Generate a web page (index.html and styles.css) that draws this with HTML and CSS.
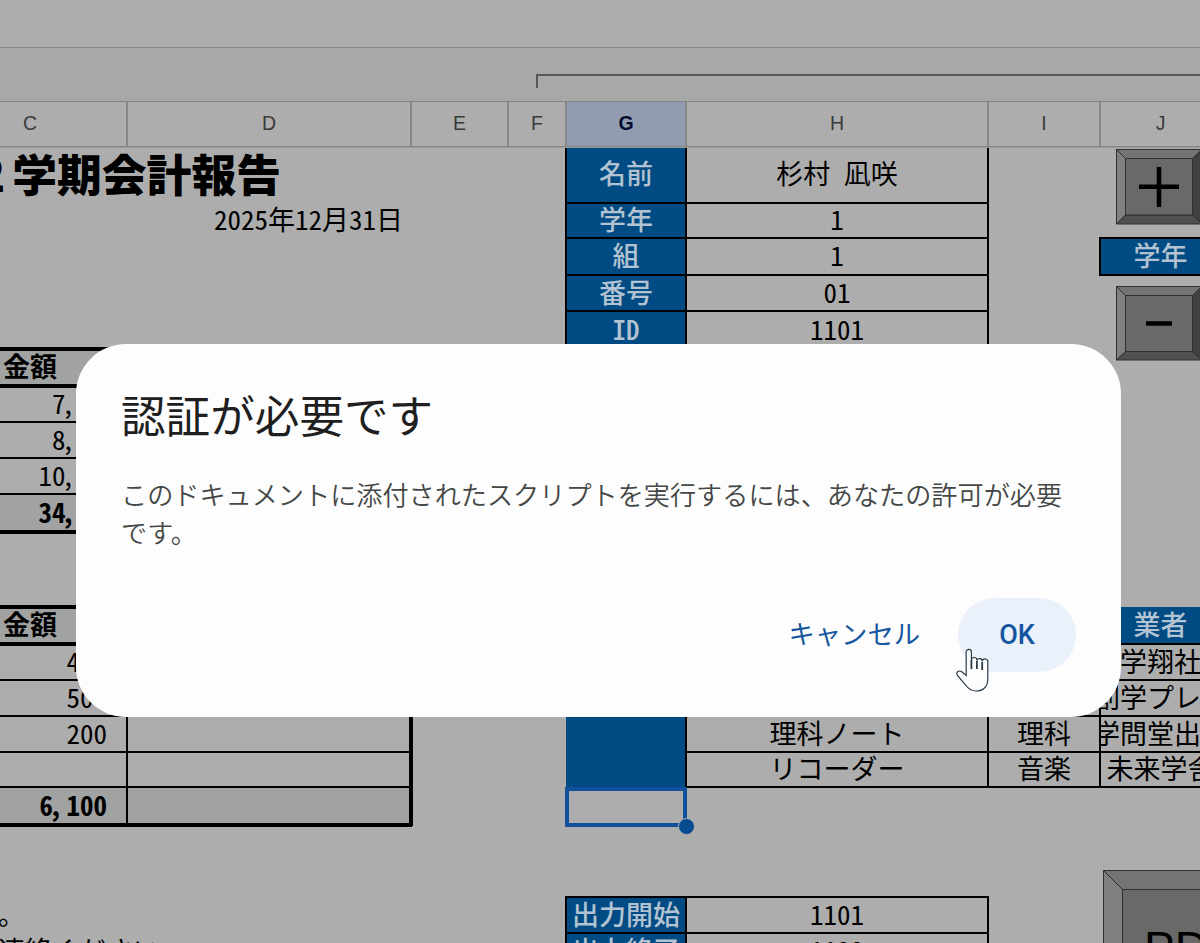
FILE: index.html
```html
<!DOCTYPE html>
<html lang="ja">
<head>
    <meta charset="UTF-8">
    <meta name="viewport" content="width=device-width, initial-scale=1.0">
    <title>会計報告</title>
    <link rel="stylesheet" href="styles.css">
</head>
<body>
    <div class="toolbar"></div>
    <div class="groups"><div class="bracket"></div></div>
    <div class="row heads">
        <div class="c">C</div>
        <div class="d">D</div>
        <div class="e">E</div>
        <div class="f">F</div>
        <div class="g active">G</div>
        <div class="h">H</div>
        <div class="i">I</div>
        <div class="j">J</div>
    </div>
    <main class="sheet">
        <div class="row r56">
            <div class="title">２学期会計報告</div>
            <div class="g line blue name">名前</div><div class="h line name">杉村 凪咲</div>
        </div>
        <div class="row r35">
            <div class="c"></div><div class="d date">2025年12月31日</div><div class="e"></div><div class="f"></div>
            <div class="g line blue">学年</div><div class="h line">1</div>
        </div>
        <div class="row r37">
            <div class="c"></div><div class="d"></div><div class="e"></div><div class="f"></div>
            <div class="g line blue">組</div><div class="h line">1</div><div class="i"></div><div class="j line blue">学年</div>
        </div>
        <div class="row r36">
            <div class="c"></div><div class="d"></div><div class="e"></div><div class="f"></div>
            <div class="g line blue">番号</div><div class="h line">01</div>
        </div>
        <div class="row r38">
            <div class="c"></div><div class="d"></div><div class="e"></div><div class="f"></div>
            <div class="g line blue">ID</div><div class="h line">1101</div>
        </div>
        <div class="row r37">
            <div class="c line thick gray">金額</div><div class="d line thick gray"></div>
        </div>
        <div class="row r36"><div class="c line part">7<span class="comma">,</span></div></div>
        <div class="row r36"><div class="c line part">8<span class="comma">,</span></div></div>
        <div class="row r36"><div class="c line part">10<span class="comma">,</span></div></div>
        <div class="row r38"><div class="c line part total gray">34<span class="comma">,</span></div></div>
        <div class="row r75"></div>
        <div class="row r37">
            <div class="c line thick gray">金額</div><div class="d line thick gray edge"></div><div class="e"></div><div class="f"></div>
            <div class="g blue"></div><div class="h blue"></div><div class="i blue"></div><div class="j blue">業者</div>
        </div>
        <div class="row r36">
            <div class="c line num">400</div><div class="d line edge"></div><div class="e"></div><div class="f"></div>
            <div class="g blue"></div><div class="h line"></div><div class="i line"></div><div class="j line">学翔社</div>
        </div>
        <div class="row r36">
            <div class="c line num">500</div><div class="d line edge"></div><div class="e"></div><div class="f"></div>
            <div class="g blue"></div><div class="h line"></div><div class="i line"></div><div class="j line">創学プレス</div>
        </div>
        <div class="row r36">
            <div class="c line num">200</div><div class="d line edge"></div><div class="e"></div><div class="f"></div>
            <div class="g blue"></div><div class="h line">理科ノート</div><div class="i line">理科</div><div class="j line">学問堂出版</div>
        </div>
        <div class="row r35">
            <div class="c line"></div><div class="d line edge"></div><div class="e"></div><div class="f"></div>
            <div class="g blue"></div><div class="h line">リコーダー</div><div class="i line">音楽</div><div class="j line">未来学舎</div>
        </div>
        <div class="row r38">
            <div class="c line num total gray">6<span class="comma">,</span>100</div><div class="d line total gray edge"></div><div class="e"></div><div class="f"></div>
            <div class="g selected"><span class="handle"></span></div>
        </div>
        <div class="row r72"></div>
        <div class="row r36">
            <div class="c note">。</div><div class="d"></div><div class="e"></div><div class="f"></div>
            <div class="g line blue">出力開始</div><div class="h line">1101</div>
        </div>
        <div class="row r36">
            <div class="c note">連絡ください</div><div class="d"></div><div class="e"></div><div class="f"></div>
            <div class="g line blue">出力終了</div><div class="h line">1122</div>
        </div>

        <!-- drawings placed over the cells -->
        <svg class="key plus" width="86" height="76" viewBox="0 0 86 76">
            <path class="left" d="M.5 .5L9.5 9.5V66L.5 75z"/>
            <path class="top" d="M.5 .5H86L76.5 9.5h-67z"/>
            <path class="right" d="M86 .5V75L76.5 66V9.5z"/>
            <path class="bottom" d="M.5 75H86L76.5 66h-67z"/>
            <path class="face" d="M9.5 9.5h67V66h-67z"/>
            <path class="sign" d="M23 37.7h40M43 18v40"/>
        </svg>
        <svg class="key minus" width="86" height="76" viewBox="0 0 86 76">
            <path class="left" d="M.5 .5L9.5 9.5V65.500L.5 74z"/>
            <path class="top" d="M.5 .5H86L76.5 9.5h-67z"/>
            <path class="right" d="M86 .5V74L76.5 65.500V9.5z"/>
            <path class="bottom" d="M.5 74H86L76.5 65.500h-67z"/>
            <path class="face" d="M9.5 9.5h67v56h-67z"/>
            <path class="sign" d="M30 37.500h26"/>
        </svg>
        <svg class="key pdf" width="120" height="80" viewBox="0 0 120 80">
            <path class="left" d="M.5 .5L19.500 19.500V90H.5z"/>
            <path class="top" d="M.5 .5H130V19.500H19.500z"/>
            <path class="face" d="M19.500 19.500H130V90H19.500z"/>
            <text x="41" y="94">PDF</text>
        </svg>
    </main>

    <div class="dialog">
        <h1>認証が必要です</h1>
        <p>このドキュメントに添付されたスクリプトを実行するには、あなたの許可が必要です。</p>
        <div class="actions">
            <button class="cancel">キャンセル</button>
            <button class="ok">OK</button>
        </div>
    </div>

    <svg class="pointer" width="34" height="46" viewBox="0 0 34 46">
        <path d="M10.200 26V5a2.600 2.600 0 0 1 5.200 0V13a2.700 2.700 0 0 1 5.500 .5a2.700 2.700 0 0 1 5.300 .8a2.400 2.400 0 0 1 5.600 1V32c0 8-5 12-11.700 12c-5 0-8-2.500-10.500-6L1.500 28.500c-2-3 1-5.500 4-4l4.700 4z"/>
        <path class="fingers" d="M15.400 13v9M20.900 14v8M26.200 15v8"/>
    </svg>
</body>
</html>
```
FILE: styles.css
```css
body {
    position: relative;
    margin: 0;
    height: 943px;
    overflow: hidden;
    background: #adadad;
    color: #000;
    font-family: "Noto Sans CJK JP", sans-serif;
}
.toolbar {
    height: 47px;
    border-bottom: 1px solid #858686;
}
.groups {
    display: flex;
    box-sizing: border-box;
    height: 53px;
    padding: 26px 0 13px 536px;
    background: #a7a9a8;
}
.bracket {
    flex: 1;
    border-top: 2px solid #555857;
    border-left: 2px solid #555857;
}

/* rows and columns */
.row {
    display: flex;
    width: 1288px;
    margin-left: -67px;
}
.row > div {
    box-sizing: border-box;
    flex: none;
    display: flex;
    align-items: center;
    justify-content: center;
    padding-bottom: 3px;
    white-space: nowrap;
}
.c { width: 194px; }
.d { width: 284px; }
.e { width: 97px; }
.f { width: 58px; }
.g { width: 120px; }
.h { width: 302px; }
.i { width: 112px; }
.j { width: 121px; }
.r35 { height: 35px; }
.r36 { height: 36px; }
.r37 { height: 37px; }
.r38 { height: 38px; }
.r56 { height: 56px; }
.r72 { height: 72px; }
.r75 { height: 75px; }

.heads {
    position: relative;
    z-index: 2;
    height: 46px;
    margin-left: -66px;
    background: #adadad;
    font: 19.5px/1 "Liberation Sans", Arial, sans-serif;
    color: #383a3b;
}
.row.heads > div {
    padding: 0;
    border: solid #858686;
    border-width: 1px 2px 1px 0;
    box-shadow: 0 1px #9a9a9a;
}
.heads .active {
    background: #929cb1;
    color: #050b30;
    font-weight: bold;
}

/* cells */
.sheet {
    position: relative;
    font-size: 27px;
    line-height: 30px;
    font-feature-settings: "hwid";
}
.line {
    outline: 2px solid #000;
    outline-offset: -1px;
}
.j { overflow: hidden; }
.blue {
    background: #004b84;
    color: #b3c3d1;
    font-weight: 500;
}
.gray { background: #a0a3a2; }
.thick {
    z-index: 1;
    font-weight: bold;
    box-shadow: 0 -2px #000, 0 2px #000, inset 0 2px #000, inset 0 -2px #000;
}
.total {
    font-weight: bold;
    box-shadow: 0 2px #000, inset 0 -2px #000;
}
.row > .name {
    padding-bottom: 5px;
}
.row > .edge {
    width: 285px;
    margin-right: -1px;
    border-right: 3px solid #000;
}
.row > .num {
    justify-content: flex-end;
    padding-right: 20px;
}
.row > .part {
    justify-content: flex-end;
    padding-right: 48px;
}
.comma {
    width: 17.5px;
    margin: 0 0 0 -4px;
}
.row > .title {
    width: 633px;
    justify-content: flex-end;
    padding: 0 285px 5px 0;
    font-size: 44.8px;
    font-weight: 900;
    font-feature-settings: normal;
}
.row > .date {
    justify-content: flex-end;
    padding: 0 8px 4px 0;
}
.row > .note {
    justify-content: flex-start;
    padding-left: 65px;
}
.row > .selected {
    position: relative;
    width: 122px;
    height: 40px;
    margin-left: -1px;
    border: 4px solid #12509b;
}
.handle {
    position: absolute;
    right: -12px;
    bottom: -12px;
    width: 15px;
    height: 15px;
    border: 1px solid #adadad;
    border-radius: 50%;
    background: #074b90;
}

/* bevelled keys */
.key {
    position: absolute;
    stroke: #303030;
    stroke-width: 1;
}
.plus { left: 1116px; top: 2px; }
.minus { left: 1116px; top: 139px; }
.pdf { left: 1103px; top: 723px; }
.left { fill: #808080; }
.top { fill: #747474; }
.right { fill: #404040; }
.bottom { fill: #505050; }
.face { fill: #696969; }
.sign {
    stroke: #000;
    stroke-width: 4.5;
}
.pdf text {
    fill: #000;
    stroke: none;
    font: 46px "Liberation Sans", Arial, sans-serif;
}

/* dialog */
.dialog {
    position: absolute;
    z-index: 3;
    left: 76px;
    top: 344px;
    box-sizing: border-box;
    width: 1045px;
    height: 373px;
    padding: 41px 43px 45px 45px;
    border-radius: 50px;
    background: #fdfdfd;
}
.dialog h1 {
    margin: 0;
    font-size: 44.6px;
    line-height: 58px;
    font-weight: 400;
    color: #1f1f1f;
}
.dialog p {
    margin: 33px 0 0;
    font-size: 26.15px;
    line-height: 37.5px;
    font-weight: 350;
    color: #444746;
}
.actions {
    display: flex;
    justify-content: flex-end;
    margin: 47px 2px 0 0;
}
.actions button {
    height: 74px;
    padding: 0;
    border: 0;
    border-radius: 37px;
    background: none;
    color: #1556a0;
    font: 26.3px "Noto Sans CJK JP", sans-serif;
}
.actions .cancel {
    margin-right: 38px;
    padding-bottom: 6px;
}
.actions .ok {
    width: 118px;
    background: #eaf1fb;
    font: 500 27px Roboto, sans-serif;
}
.pointer {
    position: absolute;
    z-index: 4;
    left: 956px;
    top: 647px;
    fill: #fdfdfd;
    stroke: #2b3a48;
    stroke-width: 1.2;
}
.fingers {
    fill: none;
    stroke-width: 1.8;
}
```
